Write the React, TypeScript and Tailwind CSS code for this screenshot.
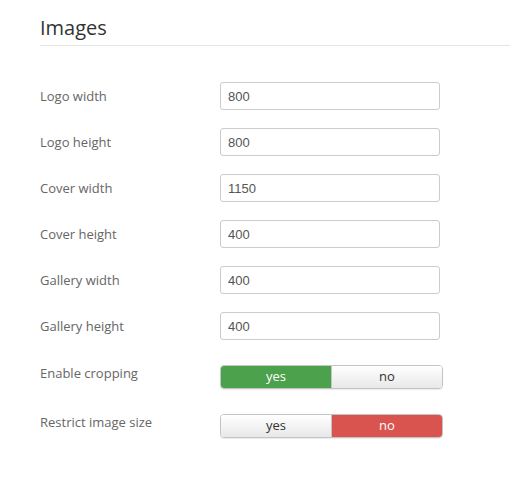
import React, { useState } from "react";

type Field = { label: string; value: string };

const fields: Field[] = [
  { label: "Logo width", value: "800" },
  { label: "Logo height", value: "800" },
  { label: "Cover width", value: "1150" },
  { label: "Cover height", value: "400" },
  { label: "Gallery width", value: "400" },
  { label: "Gallery height", value: "400" },
];

const Toggle: React.FC<{ initial: boolean }> = ({ initial }) => {
  const [on, setOn] = useState<boolean>(initial);
  return (
    <div className="flex w-[223px] h-[24px] rounded-[4px] border border-[#c4c4c4] overflow-hidden text-[13px] shadow-[0_1px_1px_rgba(0,0,0,0.08)]">
      <button
        onClick={() => setOn(true)}
        className={
          on
            ? "flex-1 bg-[#4ca14c] text-white"
            : "flex-1 bg-gradient-to-b from-white to-[#e8e8e8] text-[#333]"
        }
      >
        yes
      </button>
      <button
        onClick={() => setOn(false)}
        className={
          !on
            ? "flex-1 bg-[#d9534f] text-white border-l border-[#c4c4c4]"
            : "flex-1 bg-gradient-to-b from-white to-[#e8e8e8] text-[#333] border-l border-[#c4c4c4]"
        }
      >
        no
      </button>
    </div>
  );
};

export default function App() {
  return (
    <div className="w-[510px] h-[485px] bg-white pl-[40px] pt-[14px] font-['Open_Sans',sans-serif]">
      {/* heading */}
      <h2 className="text-[20px] leading-[28px] text-[#333] pb-[3px] border-b border-[#e5e5e5]">
        Images
      </h2>

      <div className="mt-[36px]">
        {fields.map((f) => (
          <div key={f.label} className="flex items-center h-[28px] mb-[18px]">
            <label className="w-[180px] pt-[2px] text-[13px] text-[#666]">{f.label}</label>
            <input
              defaultValue={f.value}
              className="w-[220px] h-[28px] px-[7px] border border-[#ccc] rounded-[3px] text-[13px] text-[#555] outline-none font-['Liberation_Sans',sans-serif]"
            />
          </div>
        ))}

        {/* toggles */}
        <div className="flex items-start mt-[25px]">
          <label className="w-[180px] text-[13px] leading-[16px] text-[#666]">Enable cropping</label>
          <Toggle initial={true} />
        </div>
        <div className="flex items-start mt-[25px]">
          <label className="w-[180px] text-[13px] leading-[16px] text-[#666]">Restrict image size</label>
          <Toggle initial={false} />
        </div>
      </div>
    </div>
  );
}
